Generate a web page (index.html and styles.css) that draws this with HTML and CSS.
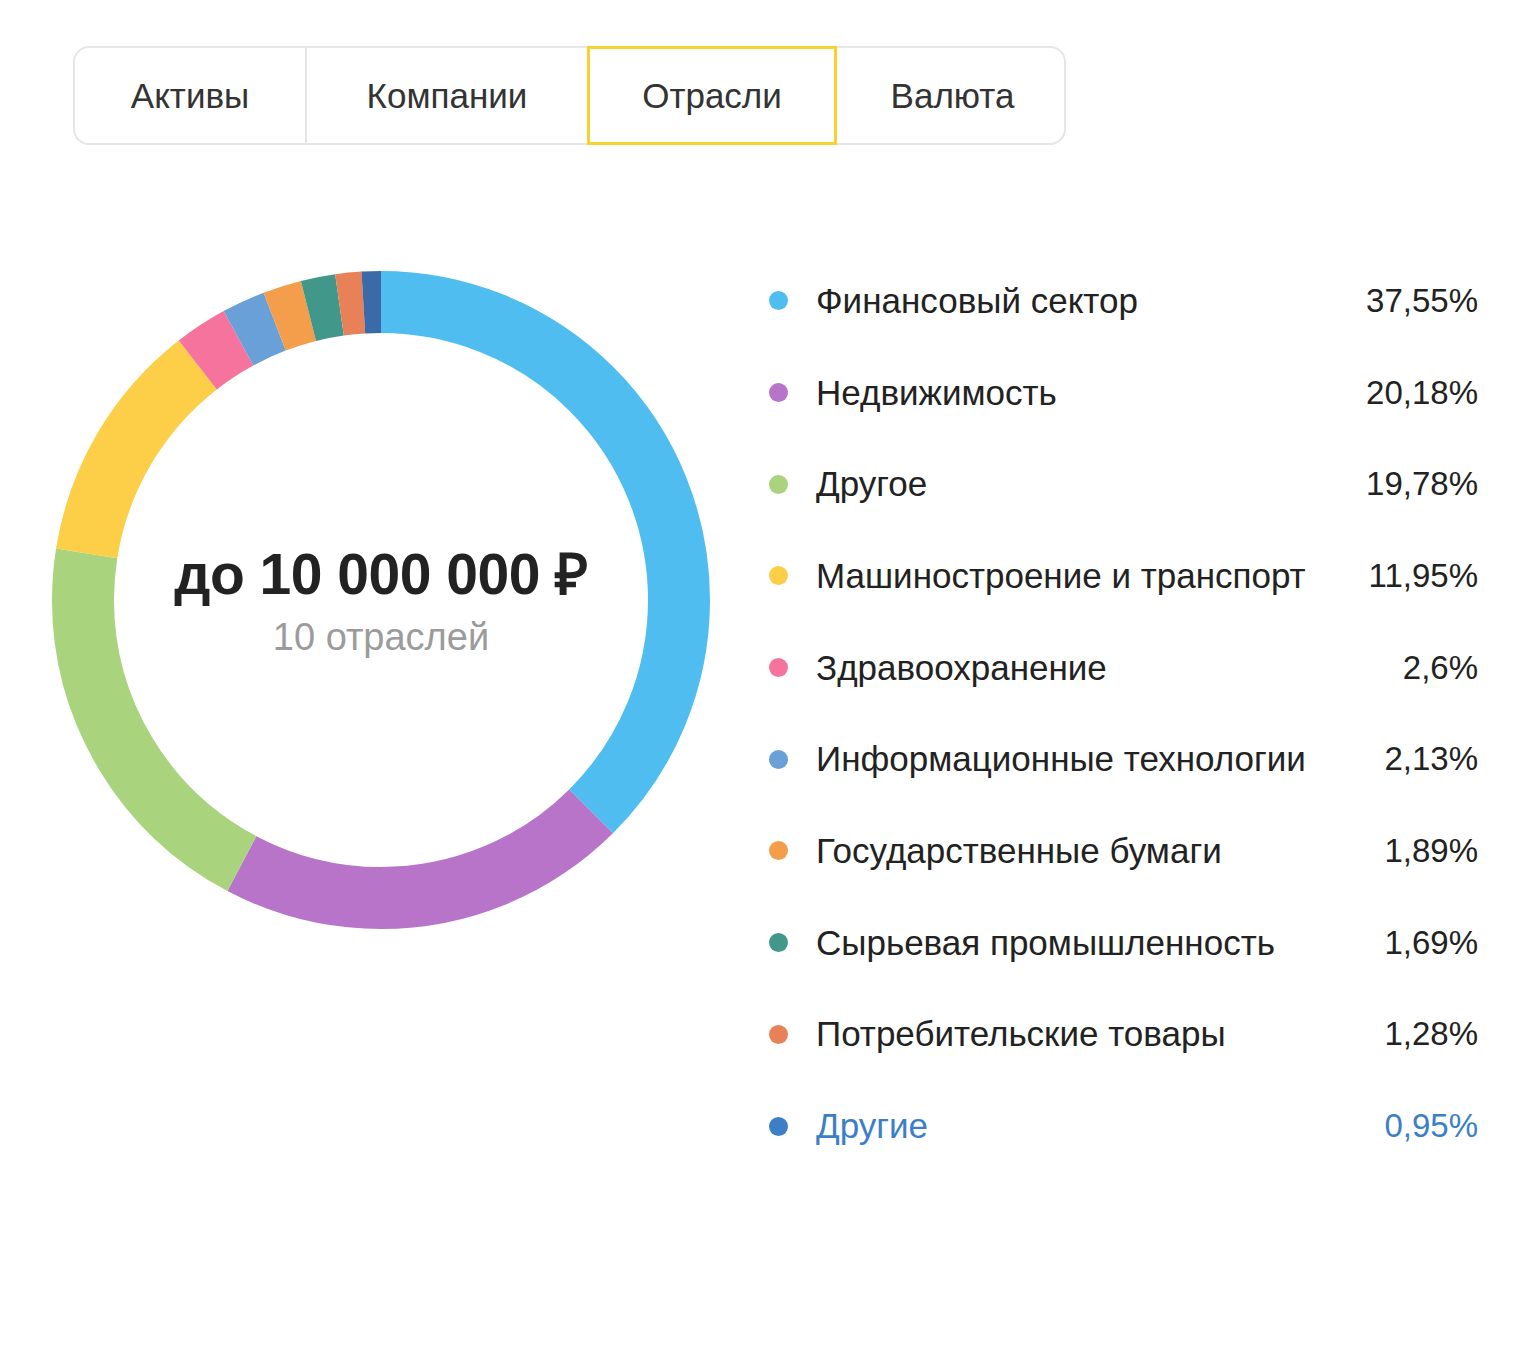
FILE: index.html
```html
<!DOCTYPE html>
<html lang="ru">
<head>
<meta charset="utf-8">
<title>Отрасли</title>
<link rel="stylesheet" href="styles.css">
</head>
<body>
<div class="page">
  <nav class="tabs">
    <div class="tab tab-1">Активы</div>
    <div class="tab tab-2">Компании</div>
    <div class="tab tab-3 active">Отрасли</div>
    <div class="tab tab-4">Валюта</div>
  </nav>
  <section class="content">
    <div class="donut">
      <svg class="donut-svg" width="658" height="658" viewBox="0 0 658 658">
        <g transform="rotate(-90 329 329)" fill="none" stroke-width="62">
          <circle cx="329" cy="329" r="298" pathLength="100" stroke="#4fbdf0" stroke-dasharray="37.55 62.45" stroke-dashoffset="0"/>
          <circle cx="329" cy="329" r="298" pathLength="100" stroke="#b774c9" stroke-dasharray="20.18 79.82" stroke-dashoffset="-37.55"/>
          <circle cx="329" cy="329" r="298" pathLength="100" stroke="#a9d37c" stroke-dasharray="19.78 80.22" stroke-dashoffset="-57.73"/>
          <circle cx="329" cy="329" r="298" pathLength="100" stroke="#fdcf48" stroke-dasharray="11.95 88.05" stroke-dashoffset="-77.51"/>
          <circle cx="329" cy="329" r="298" pathLength="100" stroke="#f5739d" stroke-dasharray="2.6 97.4" stroke-dashoffset="-89.46"/>
          <circle cx="329" cy="329" r="298" pathLength="100" stroke="#6aa0d8" stroke-dasharray="2.13 97.87" stroke-dashoffset="-92.06"/>
          <circle cx="329" cy="329" r="298" pathLength="100" stroke="#f49d4b" stroke-dasharray="1.89 98.11" stroke-dashoffset="-94.19"/>
          <circle cx="329" cy="329" r="298" pathLength="100" stroke="#41978a" stroke-dasharray="1.69 98.31" stroke-dashoffset="-96.08"/>
          <circle cx="329" cy="329" r="298" pathLength="100" stroke="#e98158" stroke-dasharray="1.28 98.72" stroke-dashoffset="-97.77"/>
          <circle cx="329" cy="329" r="298" pathLength="100" stroke="#3c6aa8" stroke-dasharray="0.95 99.05" stroke-dashoffset="-99.05"/>
        </g>
      </svg>
      <div class="donut-center">
        <div class="donut-sum">до 10 000 000 ₽</div>
        <div class="donut-sub">10 отраслей</div>
      </div>
    </div>
    <ul class="legend">
      <li class="row"><span class="dot c1"></span><span class="name">Финансовый сектор</span><span class="pct">37,55%</span></li>
      <li class="row"><span class="dot c2"></span><span class="name">Недвижимость</span><span class="pct">20,18%</span></li>
      <li class="row"><span class="dot c3"></span><span class="name">Другое</span><span class="pct">19,78%</span></li>
      <li class="row"><span class="dot c4"></span><span class="name">Машиностроение и транспорт</span><span class="pct">11,95%</span></li>
      <li class="row"><span class="dot c5"></span><span class="name">Здравоохранение</span><span class="pct">2,6%</span></li>
      <li class="row"><span class="dot c6"></span><span class="name">Информационные технологии</span><span class="pct">2,13%</span></li>
      <li class="row"><span class="dot c7"></span><span class="name">Государственные бумаги</span><span class="pct">1,89%</span></li>
      <li class="row"><span class="dot c8"></span><span class="name">Сырьевая промышленность</span><span class="pct">1,69%</span></li>
      <li class="row"><span class="dot c9"></span><span class="name">Потребительские товары</span><span class="pct">1,28%</span></li>
      <li class="row link"><span class="dot c10"></span><span class="name">Другие</span><span class="pct">0,95%</span></li>
    </ul>
  </section>
</div>
</body>
</html>
```

FILE: styles.css
```css
* { box-sizing: border-box; }
html, body { margin: 0; padding: 0; background: #fff; }
body {
  font-family: "Liberation Sans", Arial, sans-serif;
  color: #333333;
  width: 1520px;
  height: 1354px;
  overflow: hidden;
}
.page { padding: 46px 0 0 0; }

.tabs {
  display: grid;
  grid-template-columns: 232px 280px 250px 231px;
  margin-left: 73px;
  width: 993px;
  height: 99px;
  border: 2px solid #e6e6e9;
  border-radius: 16px;
}
.tab {
  display: flex;
  align-items: center;
  justify-content: center;
  font-size: 35px;
  color: #333;
  border-right: 2px solid #e6e6e9;
  margin-top: -2px;
  margin-bottom: -2px;
}
.tab-2, .tab-4 { border-right: none; }
.tab.active {
  border: 3px solid #f6d12f;
}

.content {
  display: flex;
  align-items: flex-start;
  margin-top: 110px;
  padding-left: 52px;
}
.donut {
  position: relative;
  width: 658px;
  height: 658px;
  margin-top: 16px;
  flex: none;
}
.donut-svg { display: block; }
.donut-center {
  position: absolute;
  inset: 0;
  display: flex;
  flex-direction: column;
  align-items: center;
  justify-content: center;
  padding-top: 4px;
}
.donut-sum {
  font-weight: bold;
  font-size: 57px;
  color: #222;
  letter-spacing: -0.5px;
  line-height: 64px;
  margin-top: -4px;
}
.donut-sub {
  font-size: 38px;
  color: #9b9b9b;
  line-height: 44px;
  margin-top: 9px;
}

.legend {
  list-style: none;
  margin: 0 0 0 58px;
  padding: 0;
  width: 710px;
}
.row {
  display: flex;
  align-items: center;
  height: 91.7px;
  font-size: 35px;
  color: #222;
}
.dot {
  width: 19px;
  height: 19px;
  border-radius: 50%;
  flex: none;
  margin-left: 1px;
  margin-right: 28px;
}
.name { flex: 1; }
.pct { text-align: right; font-size: 33px; }
.row.link { color: #3d7fc6; }
.c1 { background: #4fbdf0; }
.c2 { background: #b774c9; }
.c3 { background: #a9d37c; }
.c4 { background: #fdcf48; }
.c5 { background: #f5739d; }
.c6 { background: #6aa0d8; }
.c7 { background: #f49d4b; }
.c8 { background: #41978a; }
.c9 { background: #e98158; }
.c10 { background: #3d7fc6; }
```
